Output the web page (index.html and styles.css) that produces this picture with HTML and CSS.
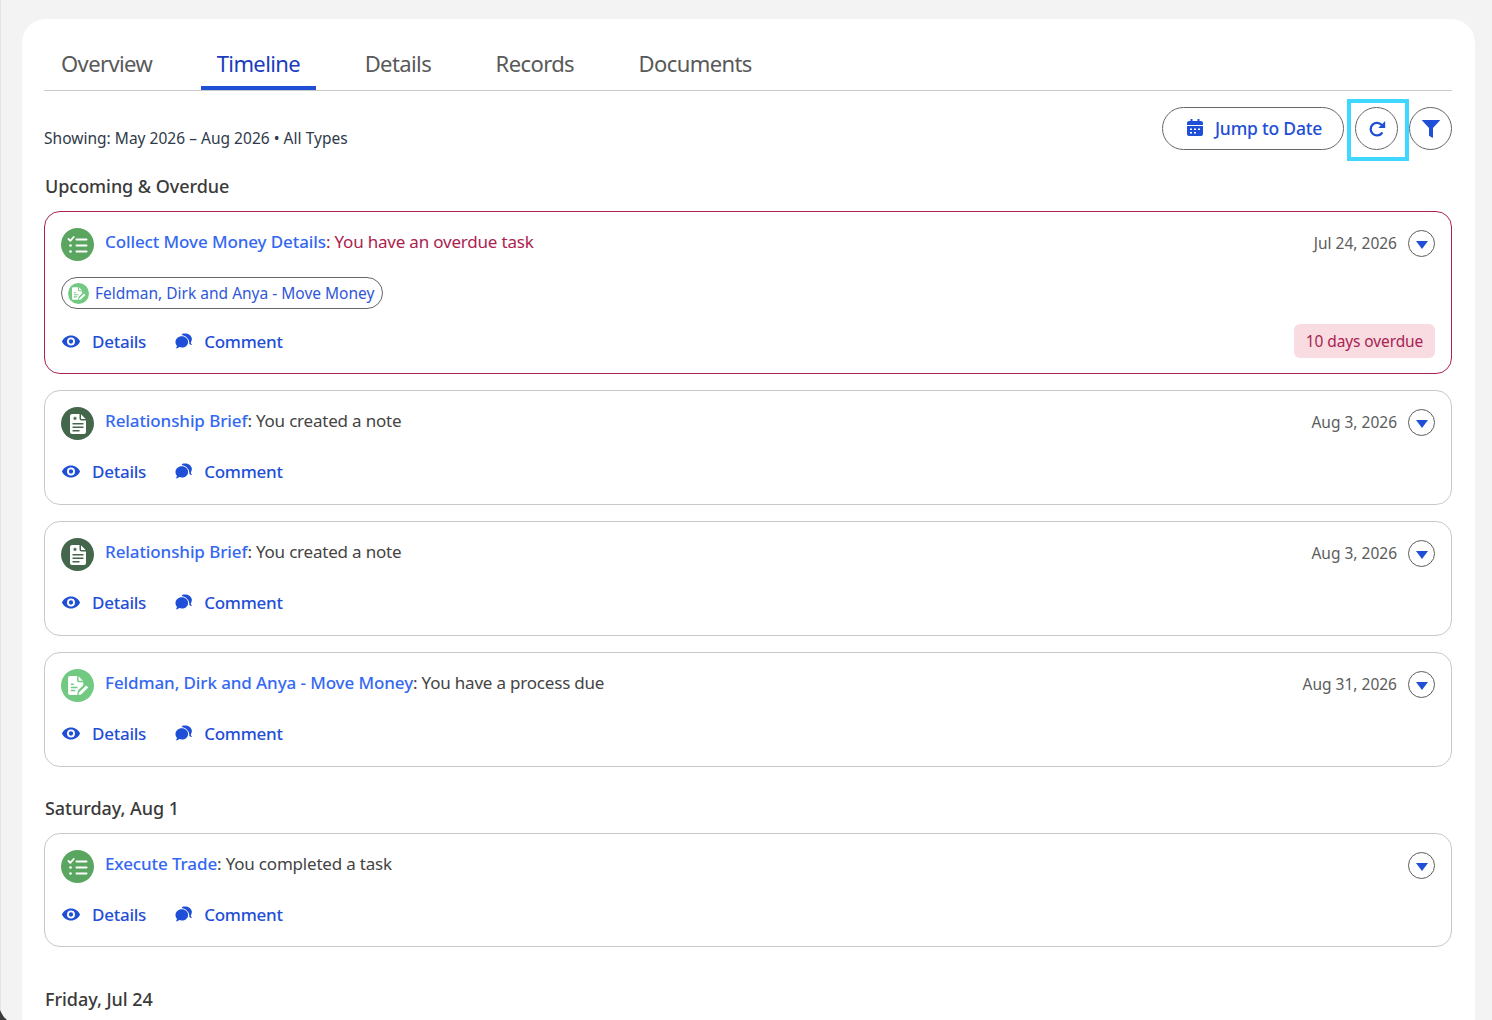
FILE: index.html
```html
<!DOCTYPE html>
<html lang="en">
<head>
<meta charset="utf-8">
<title>Timeline</title>
<link rel="stylesheet" href="styles.css">
</head>
<body>
<svg class="defs" aria-hidden="true">
  <symbol id="i-eye" viewBox="0 0 20 14"><path fill="currentColor" fill-rule="evenodd" d="M10 .5C5.6.5 2 3.2.2 7 2 10.800 5.600 13.500 10 13.500s8-2.700 9.800-6.500C18 3.200 14.400.5 10 .5zm0 2.200a4.300 4.300 0 1 1 0 8.600 4.300 4.300 0 0 1 0-8.600zm0 2a2.300 2.300 0 1 0 0 4.600 2.300 2.300 0 0 0 0-4.600z"/></symbol>
  <symbol id="i-comment" viewBox="0 0 18 16"><path fill="currentColor" d="M6.800 3.200c3.500 0 6.300 2.500 6.300 5.700s-2.800 5.600-6.300 5.600c-.9 0-1.700-.1-2.500-.4-.9.800-2 1.300-3.600 1.300.7-.8 1.200-1.700 1.300-2.700C.9 11.700.5 10.400.5 8.900c0-3.200 2.800-5.700 6.300-5.700z"/><path fill="currentColor" d="M8.300.6c4.200-.7 8 1.500 8.500 4.700.2 1.500-.2 2.900-1 4.100.1.900.6 1.800 1.300 2.600-1.100-.1-2-.5-2.800-1 .4-3.200-1.300-7.800-7.800-9.100.5-.7 1.100-1.200 1.800-1.300z"/></symbol>
  <symbol id="i-tasks" viewBox="0 0 20 18"><g fill="none" stroke="currentColor" stroke-linecap="round" stroke-linejoin="round"><path stroke-width="1.800" d="M1 3l1.800 1.800L6.200 1"/><path stroke-width="2" d="M9 3.500h10M9 9.500h10M9 15.500h10"/></g><circle cx="3" cy="9.500" r="1.300" fill="currentColor"/><circle cx="3" cy="15.500" r="1.300" fill="currentColor"/></symbol>
  <symbol id="i-note" viewBox="0 0 16 20"><path fill="currentColor" fill-rule="evenodd" d="M2 0h7.500v4.500a2 2 0 0 0 2 2H16V18a2 2 0 0 1-2 2H2a2 2 0 0 1-2-2V2a2 2 0 0 1 2-2zm9 .3L15.700 5h-4.200a.5.500 0 0 1-.5-.5zM2.500 9v1.600h11V9zm0 3.500v1.600h11v-1.600zm0 3.500v1.500h7V16zM5 2.200l-.7 1.300-1.400.2 1 1-.2 1.400L5 5.400l1.300.7-.2-1.400 1-1-1.400-.2z"/></symbol>
  <symbol id="i-process" viewBox="0 0 22 20"><path fill="currentColor" fill-rule="evenodd" d="M2 0h7.500v4.500a2 2 0 0 0 2 2H16v3.200l-5.500 5.500-.8 4.800H2a2 2 0 0 1-2-2V2a2 2 0 0 1 2-2zm9 .3L15.700 5h-4.200a.5.500 0 0 1-.5-.5zM3 8v1.600h3V8zm0 3.200v1.600h7v-1.600zm0 3.300v1.600h4.500v-1.600z"/><path fill="currentColor" d="M19 10l2.200 2.200-7.400 7.300-2.800.5.500-2.700z"/></symbol>
  <symbol id="i-calendar" viewBox="0 0 16 17"><path fill="currentColor" fill-rule="evenodd" d="M3.500 0h2v2h5V0h2v2H14a2 2 0 0 1 2 2v2H0V4a2 2 0 0 1 2-2h1.500zM0 7h16v8a2 2 0 0 1-2 2H2a2 2 0 0 1-2-2zm3 2.500V11h2V9.500zm4 0V11h2V9.500zm4 0V11h2V9.500zM3 13v1.500h2V13zm4 0v1.500h2V13z"/></symbol>
  <symbol id="i-redo" viewBox="0 0 18 18"><path fill="none" stroke="currentColor" stroke-width="2.300" stroke-linecap="round" d="M13.800 13.200A6.300 6.300 0 1 1 13.700 5"/><path fill="currentColor" d="M17.200 1v6.900h-6.900z"/></symbol>
  <symbol id="i-filter" viewBox="0 0 18 18"><path fill="currentColor" d="M.3 0h17.400c.3 0 .4.300.2.500L11 8v9c0 .7-.6 1-1.200.6L7.500 16a1 1 0 0 1-.5-.8V8L.1.500C-.1.300 0 0 .3 0z"/></symbol>
</svg>

<main class="panel">
  <nav class="tabs">
    <a class="tab">Overview</a>
    <a class="tab tab--active">Timeline</a>
    <a class="tab">Details</a>
    <a class="tab">Records</a>
    <a class="tab">Documents</a>
  </nav>

  <div class="toolbar">
    <p class="showing">Showing: May 2026 – Aug 2026 • All Types</p>
    <div class="tools">
      <button class="pill"><svg class="ic-cal"><use href="#i-calendar"/></svg>Jump to Date</button>
      <button class="round round--focus"><svg class="ic-redo"><use href="#i-redo"/></svg></button>
      <button class="round"><svg class="ic-filter"><use href="#i-filter"/></svg></button>
    </div>
  </div>

  <h2 class="group">Upcoming &amp; Overdue</h2>
  <section class="list">
    <article class="card card--overdue">
      <div class="head">
        <span class="badge badge--task"><svg class="ic-tasks"><use href="#i-tasks"/></svg></span>
        <p class="title"><a>Collect Move Money Details</a>: You have an overdue task</p>
        <span class="date">Jul 24, 2026</span>
        <button class="caret"></button>
      </div>
      <a class="chip"><span class="chip-ic"><svg class="ic-chip"><use href="#i-process"/></svg></span>Feldman, Dirk and Anya - Move Money</a>
      <div class="actions">
        <a class="act"><svg class="ic-eye"><use href="#i-eye"/></svg>Details</a>
        <a class="act"><svg class="ic-comment"><use href="#i-comment"/></svg>Comment</a>
        <span class="late">10 days overdue</span>
      </div>
    </article>

    <article class="card">
      <div class="head">
        <span class="badge badge--note"><svg class="ic-note"><use href="#i-note"/></svg></span>
        <p class="title"><a>Relationship Brief</a>: You created a note</p>
        <span class="date">Aug 3, 2026</span>
        <button class="caret"></button>
      </div>
      <div class="actions">
        <a class="act"><svg class="ic-eye"><use href="#i-eye"/></svg>Details</a>
        <a class="act"><svg class="ic-comment"><use href="#i-comment"/></svg>Comment</a>
      </div>
    </article>

    <article class="card">
      <div class="head">
        <span class="badge badge--note"><svg class="ic-note"><use href="#i-note"/></svg></span>
        <p class="title"><a>Relationship Brief</a>: You created a note</p>
        <span class="date">Aug 3, 2026</span>
        <button class="caret"></button>
      </div>
      <div class="actions">
        <a class="act"><svg class="ic-eye"><use href="#i-eye"/></svg>Details</a>
        <a class="act"><svg class="ic-comment"><use href="#i-comment"/></svg>Comment</a>
      </div>
    </article>

    <article class="card">
      <div class="head">
        <span class="badge badge--process"><svg class="ic-process"><use href="#i-process"/></svg></span>
        <p class="title"><a>Feldman, Dirk and Anya - Move Money</a>: You have a process due</p>
        <span class="date">Aug 31, 2026</span>
        <button class="caret"></button>
      </div>
      <div class="actions">
        <a class="act"><svg class="ic-eye"><use href="#i-eye"/></svg>Details</a>
        <a class="act"><svg class="ic-comment"><use href="#i-comment"/></svg>Comment</a>
      </div>
    </article>
  </section>

  <h2 class="group group--day">Saturday, Aug 1</h2>
  <section class="list">
    <article class="card card--short">
      <div class="head">
        <span class="badge badge--task"><svg class="ic-tasks"><use href="#i-tasks"/></svg></span>
        <p class="title"><a>Execute Trade</a>: You completed a task</p>
        <button class="caret"></button>
      </div>
      <div class="actions">
        <a class="act"><svg class="ic-eye"><use href="#i-eye"/></svg>Details</a>
        <a class="act"><svg class="ic-comment"><use href="#i-comment"/></svg>Comment</a>
      </div>
    </article>
  </section>

  <h2 class="group group--day2">Friday, Jul 24</h2>
</main>
<span class="corner"></span>
</body>
</html>
```
FILE: styles.css
```css
* { box-sizing: border-box; }
html, body { height: 100%; }
body {
  margin: 0;
  height: 1020px;
  overflow: hidden;
  background: #f3f3f3;
  border-left: 1px solid #e4e4e4;
  padding: 19px 17px 0 21px;
  font-family: "Noto Sans", "Open Sans", sans-serif;
  color: #444;
}
.defs { position: absolute; width: 0; height: 0; }
.corner {
  position: fixed;
  left: 0;
  bottom: 0;
  width: 7px;
  height: 10px;
  background: #3a3a3a;
  clip-path: polygon(0 0, 25% 35%, 55% 70%, 100% 100%, 0 100%);
}
p, h2 { margin: 0; }
button { font-family: inherit; cursor: pointer; padding: 0; background: #fff; }
svg { display: block; flex: none; }

.panel {
  background: #fff;
  border-radius: 24px 24px 0 0;
  padding: 0 23px 0 22px;
  height: 1001px;
  overflow: hidden;
}

.tabs {
  display: flex;
  gap: 32.5px;
  height: 72px;
  padding: 24px 0 0 1px;
  border-bottom: 1px solid #c9c9c9;
}
.tab {
  padding: 0 16px;
  height: 47px;
  font-size: 22px;
  line-height: 40px;
  color: #595959;
  letter-spacing: -.6px;
  white-space: nowrap;
}
.tab--active {
  color: #1a3cbd;
  border-bottom: 4px solid #1f4fd6;
}

.toolbar {
  display: flex;
  align-items: flex-start;
  justify-content: space-between;
  height: 60px;
  padding-top: 16px;
}
.showing {
  font-size: 15.5px;
  line-height: 22px;
  margin-top: 20px;
  color: #2f3a4a;
  letter-spacing: .02px;
}
.tools { display: flex; gap: 11px; }
.pill {
  display: flex;
  align-items: center;
  gap: 12px;
  width: 182px;
  height: 43px;
  padding: 0 0 2px 24px;
  border: 1px solid #666;
  border-radius: 22px;
  font-size: 17.5px;
  font-weight: 500;
  color: #1f4fd6;
  letter-spacing: -.2px;
}
.round {
  position: relative;
  display: flex;
  align-items: center;
  justify-content: center;
  width: 43px;
  height: 43px;
  border: 1px solid #666;
  border-radius: 50%;
  color: #1f4fd6;
}
.round--focus::after {
  content: "";
  position: absolute;
  inset: -9px -12px -12px -9px;
  border: 4px solid #3fd6ff;
}
.ic-cal { width: 16px; height: 17px; }
.ic-redo { width: 18px; height: 18px; }
.ic-filter { width: 18px; height: 18px; }

.group {
  font-size: 18px;
  line-height: 24px;
  font-weight: 500;
  color: #3a3a3a;
  margin: 23px 0 13px;
  padding-left: 1px;
  letter-spacing: -.05px;
}
.group--day { margin: 29px 0 13px; }
.group--day2 { margin: 40px 0 0; }

.list { display: flex; flex-direction: column; gap: 16px; }
.card {
  display: flex;
  flex-direction: column;
  align-items: flex-start;
  border: 1px solid #c9c9c9;
  border-radius: 16px;
  padding: 16px;
}
.card--short { padding-bottom: 15px; }
.card--overdue { border-color: #aa2350; padding-bottom: 15px; }

.head { display: flex; align-items: flex-start; width: 100%; height: 33px; }
.badge {
  display: flex;
  align-items: center;
  justify-content: center;
  width: 33px;
  height: 33px;
  border-radius: 50%;
  color: #fff;
  flex: none;
}
.badge--task { background: #5aa55f; }
.badge--note { background: #44664a; }
.badge--process { background: #72c982; }
.ic-tasks { width: 21px; height: 18px; }
.ic-note { width: 16px; height: 20px; }
.ic-process { width: 21px; height: 19px; margin-left: 2px; }

.title {
  flex: 1;
  margin-left: 11px;
  font-size: 17px;
  line-height: 28px;
  color: #444;
  letter-spacing: -.2px;
  white-space: nowrap;
}
.title a { color: #3468f2; font-weight: 500; letter-spacing: -.1px; }
.card--overdue .title { color: #aa2350; }
.date {
  font-size: 15.5px;
  line-height: 30px;
  color: #5c5c5c;
  margin-right: 11px;
}
.caret {
  position: relative;
  width: 27px;
  height: 27px;
  margin-top: 2px;
  border: 1px solid #5c5c5c;
  border-radius: 50%;
  flex: none;
}
.caret::after {
  content: "";
  position: absolute;
  left: 6.5px;
  top: 10px;
  border: 6px solid transparent;
  border-top: 8px solid #1f4fd6;
  border-bottom: 0;
}

.chip {
  display: flex;
  align-items: center;
  gap: 6px;
  height: 32px;
  margin-top: 16px;
  padding: 0 8px 0 6px;
  border: 1px solid #666;
  border-radius: 16px;
  font-size: 15.5px;
  color: #2f57d9;
  white-space: nowrap;
}
.chip-ic {
  display: flex;
  align-items: center;
  justify-content: center;
  width: 21px;
  height: 21px;
  border-radius: 50%;
  background: #72c982;
  color: #fff;
}
.ic-chip { width: 14px; height: 13px; margin-left: 1px; }

.actions {
  display: flex;
  align-items: center;
  width: 100%;
  min-height: 32px;
  margin-top: 16px;
  gap: 29px;
}
.card--overdue .actions { margin-top: 15px; }
.act {
  display: flex;
  align-items: center;
  gap: 11px;
  margin-bottom: 2px;
  font-size: 17px;
  font-weight: 500;
  color: #1f4fd6;
  letter-spacing: -.25px;
}
.card--overdue .act { margin-bottom: 0; }
.ic-eye { width: 20px; height: 13px; }
.ic-comment { width: 18px; height: 16px; }
.late {
  margin-left: auto;
  display: flex;
  align-items: center;
  justify-content: center;
  width: 141px;
  height: 34px;
  border-radius: 6px;
  background: #f8dce2;
  color: #aa2350;
  font-size: 15.5px;
  letter-spacing: -.1px;
}
```
